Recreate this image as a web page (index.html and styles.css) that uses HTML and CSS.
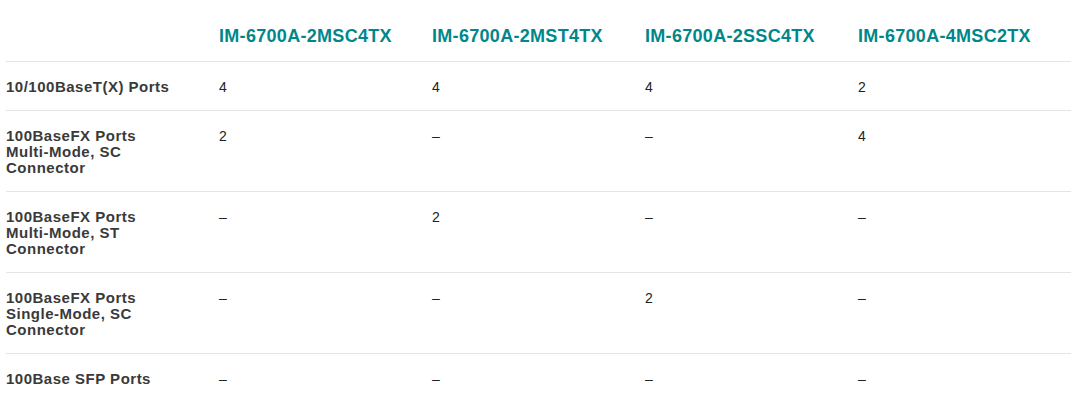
FILE: index.html
```html
<!DOCTYPE html>
<html lang="en">
<head>
<meta charset="utf-8">
<title>IM-6700A Specifications</title>
<link rel="stylesheet" href="styles.css">
</head>
<body>
<table class="spec">
  <colgroup>
    <col class="c"><col class="c"><col class="c"><col class="c"><col class="c">
  </colgroup>
  <thead>
    <tr>
      <th class="corner"></th>
      <th class="model">IM-6700A-2MSC4TX</th>
      <th class="model">IM-6700A-2MST4TX</th>
      <th class="model">IM-6700A-2SSC4TX</th>
      <th class="model">IM-6700A-4MSC2TX</th>
    </tr>
  </thead>
  <tbody>
    <tr>
      <th class="label">10/100BaseT(X) Ports</th>
      <td>4</td><td>4</td><td>4</td><td>2</td>
    </tr>
    <tr>
      <th class="label">100BaseFX Ports Multi-Mode, SC Connector</th>
      <td>2</td><td>–</td><td>–</td><td>4</td>
    </tr>
    <tr>
      <th class="label">100BaseFX Ports Multi-Mode, ST Connector</th>
      <td>–</td><td>2</td><td>–</td><td>–</td>
    </tr>
    <tr>
      <th class="label">100BaseFX Ports Single-Mode, SC Connector</th>
      <td>–</td><td>–</td><td>2</td><td>–</td>
    </tr>
    <tr>
      <th class="label">100Base SFP Ports</th>
      <td>–</td><td>–</td><td>–</td><td>–</td>
    </tr>
  </tbody>
</table>
</body>
</html>
```

FILE: styles.css
```css
html, body {
  margin: 0;
  padding: 0;
  background: #ffffff;
}

body {
  font-family: "Liberation Sans", Arial, sans-serif;
  color: #333333;
}

.spec {
  margin-left: 6px;
  width: 1065px;
  border-collapse: collapse;
  table-layout: fixed;
}

.spec .c {
  width: 213px;
}

.spec th,
.spec td {
  text-align: left;
  vertical-align: top;
  padding: 0;
}

.model {
  font-size: 18px;
  letter-spacing: 0.3px;
  font-weight: bold;
  color: #00878a;
  line-height: 22px;
  padding-top: 25px !important;
  padding-bottom: 14px !important;
}

.spec tbody tr {
  border-top: 1px solid #e4e4e4;
}

.label {
  font-size: 15px;
  letter-spacing: 0.5px;
  font-weight: bold;
  color: #3a3a3a;
  line-height: 16px;
  padding: 17px 40px 15px 0 !important;
}

.spec td {
  font-size: 14px;
  line-height: 16px;
  color: #222222;
  padding: 17px 0 15px !important;
}
```
